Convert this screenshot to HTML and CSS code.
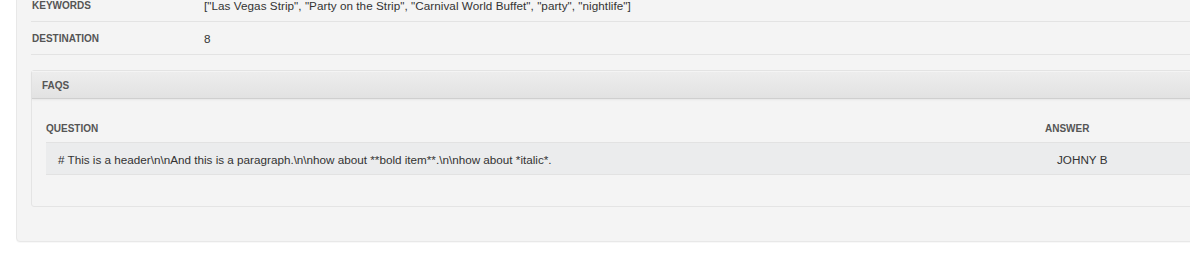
FILE: index.html
```html
<!DOCTYPE html>
<html>
<head>
<meta charset="utf-8">
<link rel="stylesheet" href="styles.css">
</head>
<body>
<div class="panel">
  <div class="row">
    <div class="label">Keywords</div>
    <div class="value">["Las Vegas Strip", "Party on the Strip", "Carnival World Buffet", "party", "nightlife"]</div>
  </div>
  <div class="row">
    <div class="label">Destination</div>
    <div class="value">8</div>
  </div>
  <div class="faq">
    <div class="faq-head">FAQs</div>
    <div class="faq-body">
      <div class="table">
        <div class="th">Question</div>
        <div class="th">Answer</div>
        <div class="td">
          # This is a header\n\nAnd this is a paragraph.\n\nhow about **bold item**.\n\nhow about *italic*.
        </div>
        <div class="td">JOHNY B</div>
      </div>
    </div>
  </div>
</div>
</body>
</html>
```
FILE: styles.css
```css
html, body {
  margin: 0;
  padding: 0;
  background: #ffffff;
  overflow: hidden;
  width: 1190px;
  height: 267px;
}
body {
  font-family: "Liberation Sans", Arial, Helvetica, sans-serif;
  font-size: 11.7px;
  color: #333;
}
.panel {
  margin: -12px 0 0 16px;
  width: 1240px;
  background: #f4f4f4;
  border: 1px solid #e8e8e8;
  border-radius: 4px;
  padding: 0 14px 34px 14px;
  box-shadow: 0 1px 1px rgba(0,0,0,0.03);
}
.row {
  display: flex;
  align-items: center;
  height: 32px;
  border-bottom: 1px solid #e3e3e3;
  padding-left: 1px;
}
.row:first-child .value {
  letter-spacing: 0.05px;
  padding-top: 1px;
}
.row:first-child .label {
  padding-top: 1px;
}
.label {
  width: 172px;
  font-size: 10px;
  font-weight: bold;
  color: #555;
  text-transform: uppercase;
}
.value {
  color: #333;
}
.faq {
  margin-top: 15px;
  border: 1px solid #e4e4e4;
  border-radius: 3px;
  background: #f4f4f4;
}
.faq-head {
  height: 26px;
  line-height: 27px;
  padding-left: 10px;
  background: linear-gradient(#ededed, #e2e2e2);
  border-top: 1px solid #f4f4f4;
  border-bottom: 1px solid #cfcfcf;
  box-shadow: 0 1px 2px rgba(0,0,0,0.06);
  font-size: 10px;
  font-weight: bold;
  color: #555;
  text-transform: uppercase;
}
.faq-body {
  padding: 14px 14px 31px 14px;
}
.table {
  display: grid;
  grid-template-columns: 999px 1fr;
}
.th {
  height: 29px;
  line-height: 31px;
  font-size: 10px;
  font-weight: bold;
  color: #555;
  text-transform: uppercase;
}
.td {
  height: 31px;
  line-height: 33px;
  padding-left: 12px;
  background: #ebeced;
  border-top: 1px solid #e2e2e2;
  border-bottom: 1px solid #e2e2e2;
  color: #333;
}
```
